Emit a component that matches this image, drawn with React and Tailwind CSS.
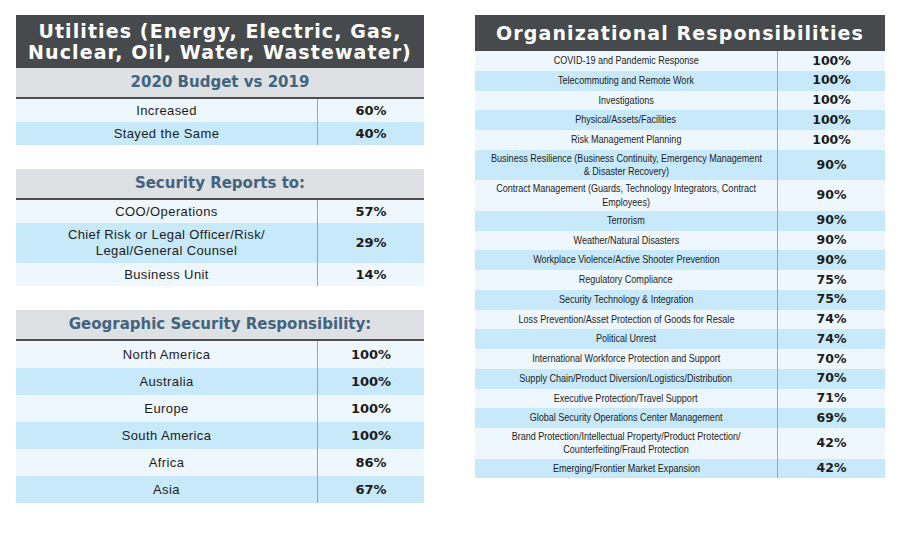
import React from "react";

const budget = [
  ["Increased", "60%"],
  ["Stayed the Same", "40%"],
];

const reports = [
  ["COO/Operations", "57%"],
  [["Chief Risk or Legal Officer/Risk/", "Legal/General Counsel"], "29%"],
  ["Business Unit", "14%"],
];

const geo = [
  ["North America", "100%"],
  ["Australia", "100%"],
  ["Europe", "100%"],
  ["South America", "100%"],
  ["Africa", "86%"],
  ["Asia", "67%"],
];

const org = [
  ["COVID-19 and Pandemic Response", "100%"],
  ["Telecommuting and Remote Work", "100%"],
  ["Investigations", "100%"],
  ["Physical/Assets/Facilities", "100%"],
  ["Risk Management Planning", "100%"],
  [["Business Resilience (Business Continuity, Emergency Management", "& Disaster Recovery)"], "90%"],
  [["Contract Management (Guards, Technology Integrators, Contract", "Employees)"], "90%"],
  ["Terrorism", "90%"],
  ["Weather/Natural Disasters", "90%"],
  ["Workplace Violence/Active Shooter Prevention", "90%"],
  ["Regulatory Compliance", "75%"],
  ["Security Technology & Integration", "75%"],
  ["Loss Prevention/Asset Protection of Goods for Resale", "74%"],
  ["Political Unrest", "74%"],
  ["International Workforce Protection and Support", "70%"],
  ["Supply Chain/Product Diversion/Logistics/Distribution", "70%"],
  ["Executive Protection/Travel Support", "71%"],
  ["Global Security Operations Center Management", "69%"],
  [["Brand Protection/Intellectual Property/Product Protection/", "Counterfeiting/Fraud Protection"], "42%"],
  ["Emerging/Frontier Market Expansion", "42%"],
];

const bold = { fontFamily: '"DejaVu Sans", Verdana, sans-serif' };
const body = { fontFamily: '"Liberation Sans", Arial, sans-serif' };

const Label = ({ text }) =>
  Array.isArray(text) ? (
    <>
      {text[0]}
      <br />
      {text[1]}
    </>
  ) : (
    text
  );

const LeftTable = ({ title, rows, rowH }) => (
  <div className="flex flex-col">
    <div
      className="h-[31px] flex items-center justify-center bg-[#dde1e3] border-b-2 border-[#4b4f52] text-[15px] font-bold text-[#43647f]"
      style={bold}
    >
      {title}
    </div>
    {rows.map(([name, val], i) => (
      <div
        key={i}
        className={`flex ${Array.isArray(name) ? "h-[40px]" : rowH} ${i % 2 ? "bg-[#c7e9fa]" : "bg-[#eef7fd]"}`}
      >
        <div
          className="flex-1 flex items-center justify-center text-center text-[13px] leading-[16px] tracking-[0.4px] text-[#1c1c1c]"
          style={body}
        >
          <span>
            <Label text={name} />
          </span>
        </div>
        <div
          className="w-[107px] border-l-[1.5px] border-[#9ea6ab] flex items-center justify-center text-[13px] font-bold text-[#1c1c1c]"
          style={bold}
        >
          {val}
        </div>
      </div>
    ))}
  </div>
);

export default function App() {
  return (
    <div className="w-[900px] h-[550px] bg-white flex pt-[15px] pl-[16px] gap-[51px]">
      <div className="w-[408px] flex flex-col gap-[24px]">
        <div className="flex flex-col">
          <div
            className="h-[53px] bg-[#464a4d] flex items-center justify-center text-center text-white text-[19px] leading-[21px] font-bold tracking-[1.1px]"
            style={bold}
          >
            <span>
              Utilities (Energy, Electric, Gas,
              <br />
              Nuclear, Oil, Water, Wastewater)
            </span>
          </div>
          <LeftTable title="2020 Budget vs 2019" rows={budget} rowH="h-[23px]" />
        </div>
        <LeftTable title="Security Reports to:" rows={reports} rowH="h-[23px]" />
        <LeftTable title="Geographic Security Responsibility:" rows={geo} rowH="h-[27px]" />
      </div>

      <div className="w-[410px] flex flex-col">
        <div
          className="h-[36px] bg-[#464a4d] flex items-center justify-center text-white text-[19px] font-bold tracking-[1.1px]"
          style={bold}
        >
          Organizational Responsibilities
        </div>
        {org.map(([name, val], i) => (
          <div
            key={i}
            className={`flex ${Array.isArray(name) ? "h-[30.5px]" : "h-[19.75px]"} ${i % 2 ? "bg-[#c7e9fa]" : "bg-[#eef7fd]"}`}
          >
            <div
              className="flex-1 min-w-0 flex items-center justify-center text-center text-[10.5px] leading-[13.5px] text-[#1c1c1c]"
              style={body}
            >
              <span className="inline-block whitespace-nowrap scale-x-[0.86]">
                <Label text={name} />
              </span>
            </div>
            <div
              className="w-[108px] border-l-[1.5px] border-[#9ea6ab] flex items-center justify-center text-[12.5px] font-bold text-[#1c1c1c]"
              style={bold}
            >
              {val}
            </div>
          </div>
        ))}
      </div>
    </div>
  );
}
